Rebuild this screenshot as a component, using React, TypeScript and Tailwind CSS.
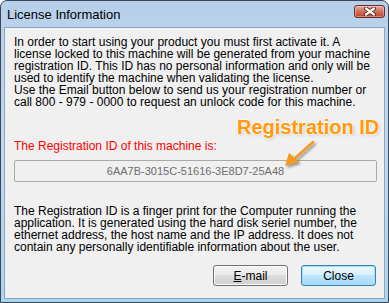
import React from "react";

const intro = [
  "In order to start using your product you must first activate it. A",
  "license locked to this machine will be generated from your machine",
  "registration ID. This ID has no personal information and only will be",
  "used to identify the machine when validating the license.",
  "Use the Email button below to send us your registration number or",
  "call 800 - 979 - 0000 to request an unlock code for this machine.",
];

const about = [
  "The Registration ID is a finger print for the Computer running the",
  "application. It is generated using the hard disk seriel number, the",
  "ethernet address, the host name and the IP address. It does not",
  "contain any personally identifiable information about the user.",
];

function CloseGlyph() {
  return (
    <svg width="14" height="9" viewBox="0 0 14 9">
      <path d="M3 1.5 L11 7.5 M11 1.5 L3 7.5" stroke="#5a1d14" strokeWidth="4" strokeLinecap="round" />
      <path d="M3 1.5 L11 7.5 M11 1.5 L3 7.5" stroke="#ffffff" strokeWidth="2.2" strokeLinecap="round" />
    </svg>
  );
}

function Arrow() {
  return (
    <svg className="absolute left-[278px] top-[136px]" width="44" height="38" viewBox="0 0 44 38">
      <defs>
        <filter id="blur" x="-20%" y="-20%" width="140%" height="140%">
          <feGaussianBlur stdDeviation="1.2" />
        </filter>
      </defs>
      <g transform="translate(2 2)" opacity="0.55" filter="url(#blur)">
        <path d="M34 5 L15 22" stroke="#555" strokeWidth="2.5" strokeLinecap="round" />
        <path d="M6 29 L10 16 L20 25 Z" fill="#555" />
      </g>
      <path d="M34 5 L15 22" stroke="#f59a1c" strokeWidth="2.5" strokeLinecap="round" />
      <path d="M6 29 L10 16 L20 25 Z" fill="#f59a1c" />
    </svg>
  );
}

export default function App() {
  return (
    <div className="w-[389px] h-[303px] bg-white font-['Liberation_Sans',Arial,sans-serif] text-black">
      <div className="relative flex h-full flex-col rounded-t-[7px] border border-[#3a4656] bg-gradient-to-b from-[#b7d0ea] via-[#c3d8ee] to-[#a9d6ee]">
        <div className="flex h-[26px] items-start justify-between pl-[6px] pr-[3px]">
          <span className="mt-[6px] text-[13px] leading-[15px] text-black">License Information</span>
          <button className="mt-[4px] flex h-[13px] w-[31px] items-center justify-center rounded-[3px] border border-[#6b2a22] bg-gradient-to-b from-[#e6aca2] via-[#d06e5c] to-[#c0432f] shadow-[inset_0_0_0_1px_rgba(255,255,255,0.35)]">
            <CloseGlyph />
          </button>
        </div>

        <div className="mx-[3px] mb-[3px] flex flex-1 flex-col border border-[#8ea6c2] bg-[#f0f0f0] pl-[9px] pr-[7px]">
          <div className="mt-[8px] whitespace-nowrap text-[12px] leading-[12px]">
            {intro.map((line) => (
              <div key={line}>{line}</div>
            ))}
          </div>

          <div className="mt-[32px] text-[12px] leading-[12px] text-[#ff0000]">
            The Registration ID of this machine is:
          </div>

          <div className="mt-[8px] flex h-[22px] w-[363px] items-center justify-center rounded-[2px] border border-[#a9a9a9] bg-[#f0f0f0] text-[11px] text-[#6d6d6d]">
            6AA7B-3015C-51616-3E8D7-25A48
          </div>

          <div className="mt-[23px] whitespace-nowrap text-[12px] leading-[12px]">
            {about.map((line) => (
              <div key={line}>{line}</div>
            ))}
          </div>

          <div className="mt-[12px] flex justify-end gap-[13px] pr-[1px]">
            <button className="h-[21px] w-[75px] rounded-[3px] border border-[#707070] bg-[linear-gradient(#f2f2f2_0%,#ebebeb_50%,#dddddd_50%,#cfcfcf_100%)] text-[12px] shadow-[inset_0_0_0_1px_#fcfcfc]">
              <span className="underline">E</span>-mail
            </button>
            <button className="h-[21px] w-[75px] rounded-[3px] border border-[#3c7fb1] bg-[linear-gradient(#eaf6fd_0%,#d9f0fc_50%,#bee6fd_50%,#a7d9f5_100%)] text-[12px] shadow-[inset_0_0_0_1px_#9ee0f9]">
              Close
            </button>
          </div>
        </div>

        <div className="absolute left-[236px] top-[116px] text-[20px] font-bold leading-[20px] text-[#ff9a0a] [text-shadow:0_0_2px_#fff,0_0_2px_#fff,0_0_3px_#fff,1px_1px_3px_rgba(0,0,0,0.25)]">
          Registration ID
        </div>
        <Arrow />
      </div>
    </div>
  );
}
